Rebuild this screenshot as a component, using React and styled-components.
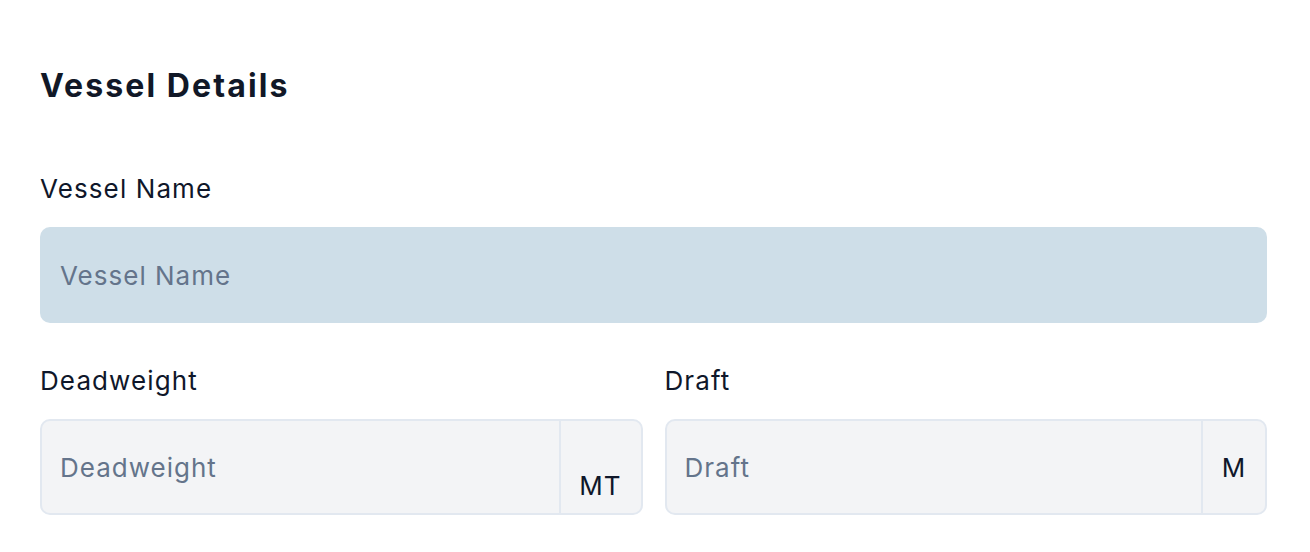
import React from 'react';
import styled, { createGlobalStyle } from 'styled-components';

const GlobalStyle = createGlobalStyle`
  body {
    margin: 0;
    background: #ffffff;
    font-family: Inter, "Noto Sans", sans-serif;
  }
`;

const Page = styled.main`
  padding: 67px 43px 0 40px;
`;

const Title = styled.h2`
  margin: 0 0 68px;
  color: #111827;
  font-size: 32px;
  font-weight: 700;
  letter-spacing: 2.1px;
  line-height: 38px;
`;

const Row = styled.div`
  display: grid;
  grid-template-columns: 1fr 1fr;
  gap: 22px;
`;

const Field = styled.div`
  display: flex;
  flex-direction: column;
  margin-bottom: 42px;
`;

const Label = styled.label`
  margin-bottom: 22px;
  color: #0f172a;
  font-size: 26px;
  font-weight: 400;
  letter-spacing: 1.1px;
  line-height: 32px;
`;

const InputBox = styled.div`
  display: flex;
  height: 96px;
  box-sizing: border-box;
  border: ${({ $tinted }) => ($tinted ? 'none' : '2px solid #e2e8f0')};
  border-radius: 10px;
  background: ${({ $tinted }) => ($tinted ? '#cedee8' : '#f3f4f6')};
  overflow: hidden;
`;

const Input = styled.input`
  flex: 1;
  min-width: 0;
  border: none;
  outline: none;
  background: transparent;
  padding: 0 ${({ $inset }) => $inset}px;
  color: #0f172a;
  font-family: inherit;
  font-size: 26px;
  letter-spacing: 1px;

  &::placeholder {
    color: #64748b;
  }
`;

const Unit = styled.span`
  display: flex;
  align-items: ${({ $low }) => ($low ? 'flex-end' : 'center')};
  justify-content: center;
  padding: ${({ $low }) => ($low ? '0 0 12px' : '0')};
  width: ${({ $width }) => $width}px;
  border-left: 2px solid #e2e8f0;
  color: #0f172a;
  font-size: 26px;
  letter-spacing: 1px;
`;

const App = () => (
  <Page>
    <GlobalStyle />
    <Title>Vessel Details</Title>
    <Field>
      <Label>Vessel Name</Label>
      <InputBox $tinted>
        <Input $inset={20} placeholder="Vessel Name" />
      </InputBox>
    </Field>
    <Row>
      <Field>
        <Label>Deadweight</Label>
        <InputBox>
          <Input $inset={18} placeholder="Deadweight" />
          <Unit $width={80} $low>MT</Unit>
        </InputBox>
      </Field>
      <Field>
        <Label>Draft</Label>
        <InputBox>
          <Input $inset={18} placeholder="Draft" />
          <Unit $width={62}>M</Unit>
        </InputBox>
      </Field>
    </Row>
  </Page>
);

export default App;
